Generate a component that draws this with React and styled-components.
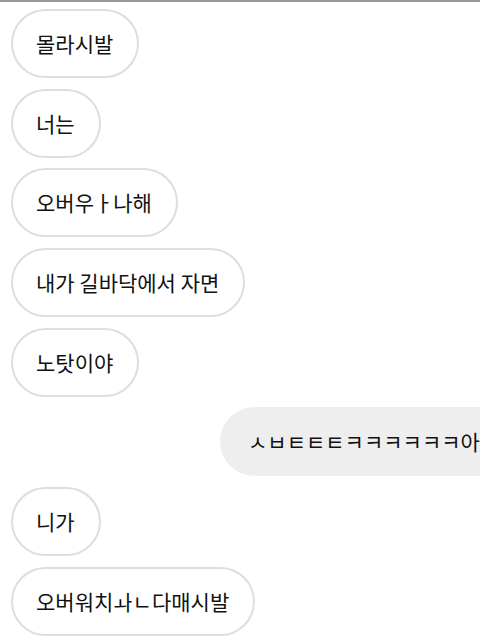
import React from "react";
import styled, { createGlobalStyle } from "styled-components";

const received = [
  "몰라시발",
  "너는",
  "오버우ㅏ나해",
  "내가 길바닥에서 자면",
  "노탓이야",
];

const after = ["니가", "오버워치ㅘㄴ다매시발"];

const GlobalStyle = createGlobalStyle`
  html, body {
    margin: 0;
    padding: 0;
    background: #fff;
    overflow: hidden;
  }
  body {
    font-family: "Noto Sans CJK KR", "Noto Sans", sans-serif;
  }
`;

const Screen = styled.div`
  width: 480px;
  height: 640px;
  box-sizing: border-box;
  border-top: 2px solid #9a9a9a;
  overflow: hidden;
`;

const Thread = styled.div`
  display: flex;
  flex-direction: column;
  gap: 10.7px;
  padding: 7px 0 0 11px;
`;

const Row = styled.div`
  display: flex;
  justify-content: flex-start;
  padding-left: ${(p) => (p.$sent ? "209px" : "0")};
  overflow: hidden;
`;

const Bubble = styled.div`
  flex: none;
  display: flex;
  align-items: center;
  box-sizing: border-box;
  height: 69px;
  padding: 0 24px 0 ${(p) => (p.$sent ? "28px" : "23px")};
  border-radius: 35px;
  border: ${(p) => (p.$sent ? "none" : "2px solid #dedede")};
  background: ${(p) => (p.$sent ? "#eeeeee" : "#ffffff")};
  color: #111;
  font-size: 21px;
  line-height: 1;
  white-space: nowrap;
`;

export default function App() {
  return (
    <>
      <GlobalStyle />
      <Screen>
        <Thread>
          {received.map((text, i) => (
            <Row key={"r" + i}>
              <Bubble>{text}</Bubble>
            </Row>
          ))}
          <Row $sent>
            <Bubble $sent>ㅅㅂㅌㅌㅌㅋㅋㅋㅋㅋㅋ아니</Bubble>
          </Row>
          {after.map((text, i) => (
            <Row key={"a" + i}>
              <Bubble>{text}</Bubble>
            </Row>
          ))}
        </Thread>
      </Screen>
    </>
  );
}
